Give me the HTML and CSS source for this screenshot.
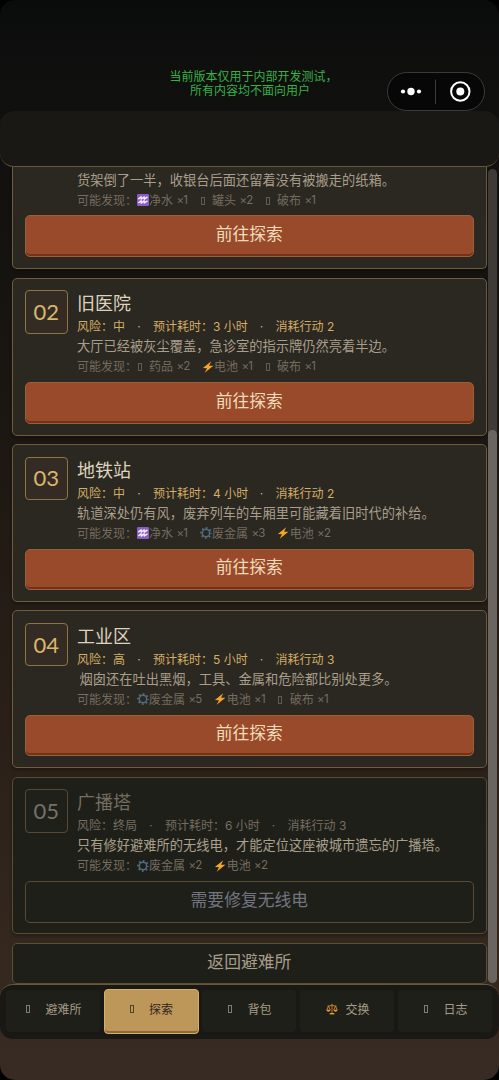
FILE: index.html
```
<!DOCTYPE html>
<html lang="zh-CN">
<head>
<meta charset="utf-8">
<title>探索</title>
<link rel="stylesheet" href="styles.css">
</head>
<body>
<svg class="defs" width="0" height="0">
  <symbol id="water" viewBox="0 0 12 12"><rect width="12" height="12" rx="1.2" fill="#8a5cc4"/><path d="M1.3 5.2 4 3 4.4 5 7 3 7.4 5 10.5 3M1.3 9 4 6.8 4.4 8.8 7 6.8 7.4 8.8 10.5 6.8" fill="none" stroke="#f4ecfb" stroke-width="1.5"/></symbol>
  <symbol id="bolt" viewBox="0 0 12 12"><path d="M9.2.3.9 7.1 5 7.2 2.7 11.8 11.4 4.8 7.1 4.8z" fill="#f6a329"/></symbol>
  <symbol id="gear" viewBox="0 0 12 12"><circle cx="6" cy="6" r="3.7" fill="none" stroke="#4f6b80" stroke-width="1.5"/><circle cx="6" cy="6" r="5" fill="none" stroke="#4f6b80" stroke-width="1.8" stroke-dasharray="1.7 2.227" stroke-dashoffset=".85"/></symbol>
  <symbol id="scale" viewBox="0 0 12 12"><path d="M6 .8V10M1.5 3Q4 3.2 6 2.1 8 3.2 10.5 3M3.5 10.8h5M2.5 3 .8 7M2.5 3 4.2 7M9.5 3 7.8 7M9.5 3 11.2 7" fill="none" stroke="#d28b25" stroke-width=".9"/><path d="M.3 6.8h4.3Q4 8.7 2.4 8.7T.3 6.8M7.4 6.8h4.3Q11.1 8.7 9.5 8.7T7.4 6.8M4 10h4v1.2H4z" fill="#e59c2c"/></symbol>
</svg>
<div class="phone">
  <div class="status">
    <p class="notice">当前版本仅用于内部开发测试<span class="comma">，</span><br>所有内容均不面向用户</p>
    <div class="capsule">
      <svg width="96" height="37" viewBox="1 .5 96 37"><g fill="#fff"><circle cx="16" cy="19" r="2.1"/><circle cx="24" cy="19" r="3.7"/><circle cx="32" cy="19" r="2.1"/><circle cx="73.3" cy="19" r="4"/></g><circle cx="73.3" cy="19" r="9.2" fill="none" stroke="#fff" stroke-width="2"/><path d="M48.5 7v24.5" stroke="#3c3c3b"/></svg>
    </div>
  </div>
  <header class="header"></header>
  <main class="scroll">
    <section class="card first">
      <div class="top"><div class="info">
        <p class="desc">货架倒了一半，收银台后面还留着没有被搬走的纸箱。</p>
        <div class="loot"><span class="label">可能发现：</span><span class="item"><svg><use href="#water"/></svg>净水 <small>×1</small></span><span class="item two"><i></i>罐头 <small>×2</small></span><span class="item"><i></i>破布 <small>×1</small></span></div>
      </div></div>
      <button class="go">前往探索</button>
    </section>
    <section class="card">
      <div class="top"><div class="badge">02</div><div class="info">
        <h2>旧医院</h2>
        <div class="risk"><span>风险：中</span><b>·</b><span class="time">预计耗时：3 小时</span><b>·</b><span>消耗行动 2</span></div>
        <p class="desc">大厅已经被灰尘覆盖，急诊室的指示牌仍然亮着半边。</p>
        <div class="loot"><span class="label">可能发现：</span><span class="item two"><i></i>药品 <small>×2</small></span><span class="item"><svg><use href="#bolt"/></svg>电池 <small>×1</small></span><span class="item"><i></i>破布 <small>×1</small></span></div>
      </div></div>
      <button class="go">前往探索</button>
    </section>
    <section class="card">
      <div class="top"><div class="badge">03</div><div class="info">
        <h2>地铁站</h2>
        <div class="risk"><span>风险：中</span><b>·</b><span class="time">预计耗时：4 小时</span><b>·</b><span>消耗行动 2</span></div>
        <p class="desc">轨道深处仍有风，废弃列车的车厢里可能藏着旧时代的补给。</p>
        <div class="loot"><span class="label">可能发现：</span><span class="item"><svg><use href="#water"/></svg>净水 <small>×1</small></span><span class="item wide"><svg><use href="#gear"/></svg>废金属 <small>×3</small></span><span class="item"><svg><use href="#bolt"/></svg>电池 <small>×2</small></span></div>
      </div></div>
      <button class="go">前往探索</button>
    </section>
    <section class="card">
      <div class="top"><div class="badge">04</div><div class="info">
        <h2>工业区</h2>
        <div class="risk"><span>风险：高</span><b>·</b><span class="time">预计耗时：5 小时</span><b>·</b><span>消耗行动 3</span></div>
        <p class="desc indent">烟囱还在吐出黑烟，工具、金属和危险都比别处更多。</p>
        <div class="loot"><span class="label">可能发现：</span><span class="item wide"><svg><use href="#gear"/></svg>废金属 <small>×5</small></span><span class="item"><svg><use href="#bolt"/></svg>电池 <small>×1</small></span><span class="item"><i></i>破布 <small>×1</small></span></div>
      </div></div>
      <button class="go">前往探索</button>
    </section>
    <section class="card locked">
      <div class="top"><div class="badge">05</div><div class="info">
        <h2>广播塔</h2>
        <div class="risk"><span>风险：终局</span><b>·</b><span class="time">预计耗时：6 小时</span><b>·</b><span>消耗行动 3</span></div>
        <p class="desc">只有修好避难所的无线电，才能定位这座被城市遗忘的广播塔。</p>
        <div class="loot"><span class="label">可能发现：</span><span class="item wide"><svg><use href="#gear"/></svg>废金属 <small>×2</small></span><span class="item"><svg><use href="#bolt"/></svg>电池 <small>×2</small></span></div>
      </div></div>
      <button class="go">需要修复无线电</button>
    </section>
    <button class="back">返回避难所</button>
    <div class="track"><div class="thumb"></div></div>
  </main>
  <nav class="nav">
    <a class="tab"><i></i>避难所</a>
    <a class="tab active"><i></i>探索</a>
    <a class="tab"><i></i>背包</a>
    <a class="tab trade"><svg><use href="#scale"/></svg>交换</a>
    <a class="tab"><i></i>日志</a>
  </nav>
</div>
</body>
</html>
```
FILE: styles.css
```
* { box-sizing: border-box; }
body { margin: 0; background: #000; font-family: Inter, "Noto Sans CJK SC", sans-serif; }
.defs { position: absolute; }
.phone {
  width: 499px; height: 1080px; border-radius: 15px; overflow: hidden;
  display: flex; flex-direction: column;
  background: linear-gradient(#090c0b 0, #0f0f0e 70px, #12110f 180px, #1a1612 400px, #291f18 700px, #33271e 940px, #382b23 1080px);
}
.status { height: 110.5px; flex: none; position: relative; }
.notice { margin: 0; padding: 70px 0 0 1px; text-align: center; font-size: 12px; line-height: 14px; color: #36b248; }
.comma { display: inline-block; width: 5px; }
.capsule {
  position: absolute; left: 387px; top: 72px; width: 98px; height: 39px;
  border: 1px solid #3b3b39; border-radius: 20px; background: #070707; z-index: 3;
}
.capsule svg { display: block; }
.header {
  height: 56.5px; flex: none; position: relative; z-index: 2;
  background: #1a1815; border-bottom: 1px solid #66563a; border-radius: 14px;
}
.scroll {
  height: 817px; flex: none; position: relative; overflow: hidden;
  padding: 0 12.4px 0 12px; display: flex; flex-direction: column; gap: 8.5px;
}
.card {
  height: 157.8px; flex: none; padding: 11.5px 11.5px 0;
  border: 1px solid #6e5c3c; border-radius: 5px; background: #2b2721;
  box-shadow: 0 2px 3px rgba(8, 6, 4, .35);
}
.first { height: 102.3px; padding-top: 1.5px; border-top: 0; border-radius: 0 0 5px 5px; }
.top { display: flex; gap: 9px; height: 92px; }
.first .top { height: 46.8px; padding-left: 52.5px; }
.badge {
  width: 43.5px; height: 43.5px; flex: none; display: flex; align-items: center; justify-content: center;
  border: 1px solid #8f7442; border-radius: 4px; background: #342c24;
  color: #d9b76c; font-family: Lato, sans-serif; font-size: 22px; line-height: 40px;
}
.info { flex: 1; white-space: nowrap; }
h2 { margin: 0; font-size: 18px; line-height: 27px; font-weight: 400; color: #ddd3bd; }
.risk { display: flex; font-size: 12px; line-height: 19px; height: 18px; color: #d3ae65; }
.risk b { width: 28px; text-align: center; font-weight: 400; }
.time { width: 94.5px; }
.desc { margin: 0; padding-top: 1px; font-size: 13.25px; line-height: 20px; height: 21px; color: #a89e8a; }
.indent { padding-left: 2.5px; }
.loot { display: flex; font-size: 12px; line-height: 21px; height: 21px; color: #746c5f; }
.label { width: 59.5px; }
.item { width: 63px; display: flex; align-items: center; white-space: pre; }
.item.two { width: 65px; }
.item.wide { width: 77.7px; }
.item svg { width: 12px; height: 12px; margin: 0 .5px 0 0; }
small { font-size: 11.5px; letter-spacing: -.7px; }
i { width: 4px; height: 8px; flex: none; border: 1px solid currentColor; opacity: .75; }
.item i { margin: 1px 7.5px 0 1px; }
button { font-family: inherit; padding: 0; border-radius: 5px; }
.go {
  display: block; width: 100%; height: 41.5px; border: 1px solid #986039;
  background: #994a2b; box-shadow: inset 0 -2px #743219;
  color: #f0dcba; font-size: 16.8px; line-height: 34px; padding-bottom: 4.5px;
}
.locked { background: #1f1f1a; border-color: #5a4c34; }
.locked .badge { background: #20201b; border-color: #594832; color: #777063; }
.locked h2, .locked .risk { color: #746d60; }
.locked .desc { color: #aaa08a; }
.locked .go { background: #1f1f1a; border-color: #5a4b34; color: #717581; box-shadow: none; padding-bottom: 3.5px; }
.back {
  height: 41.5px; flex: none; border: 1px solid #5c4d33; background: #1f1f1a;
  color: #a79d89; font-size: 16.8px; line-height: 34px; padding-bottom: 4px;
}
.track { position: absolute; left: 488px; top: 2px; width: 9px; height: 814px; border-radius: 5px; background: #3d3a38; }
.thumb { position: absolute; top: 261px; width: 9px; height: 553px; border-radius: 5px; background: #6b6561; }
.nav {
  height: 55px; flex: none; position: relative; z-index: 2;
  display: grid; grid-template-columns: repeat(5, 95px); gap: 3px; padding: 5px 6px;
  background: #1a1815; border-top: 1px solid #66563a; border-radius: 13px;
}
.tab {
  height: 42px; margin-right: 1px; display: flex; align-items: center; justify-content: center; gap: 15px;
  background: #1f1f1a; color: #a59b86; font-size: 12px; border-radius: 4px; padding: 0 0 5px 2px;
}
.active {
  height: 45px; margin-top: -1px; margin-right: 0; background: #bd965a; color: #30271a;
  border: 1px solid #d4b06b; box-shadow: inset 0 -2px #8d6b39; padding: 0 0 6px;
}
.trade { gap: 7px; }
.trade svg { width: 12px; height: 12px; }
```
